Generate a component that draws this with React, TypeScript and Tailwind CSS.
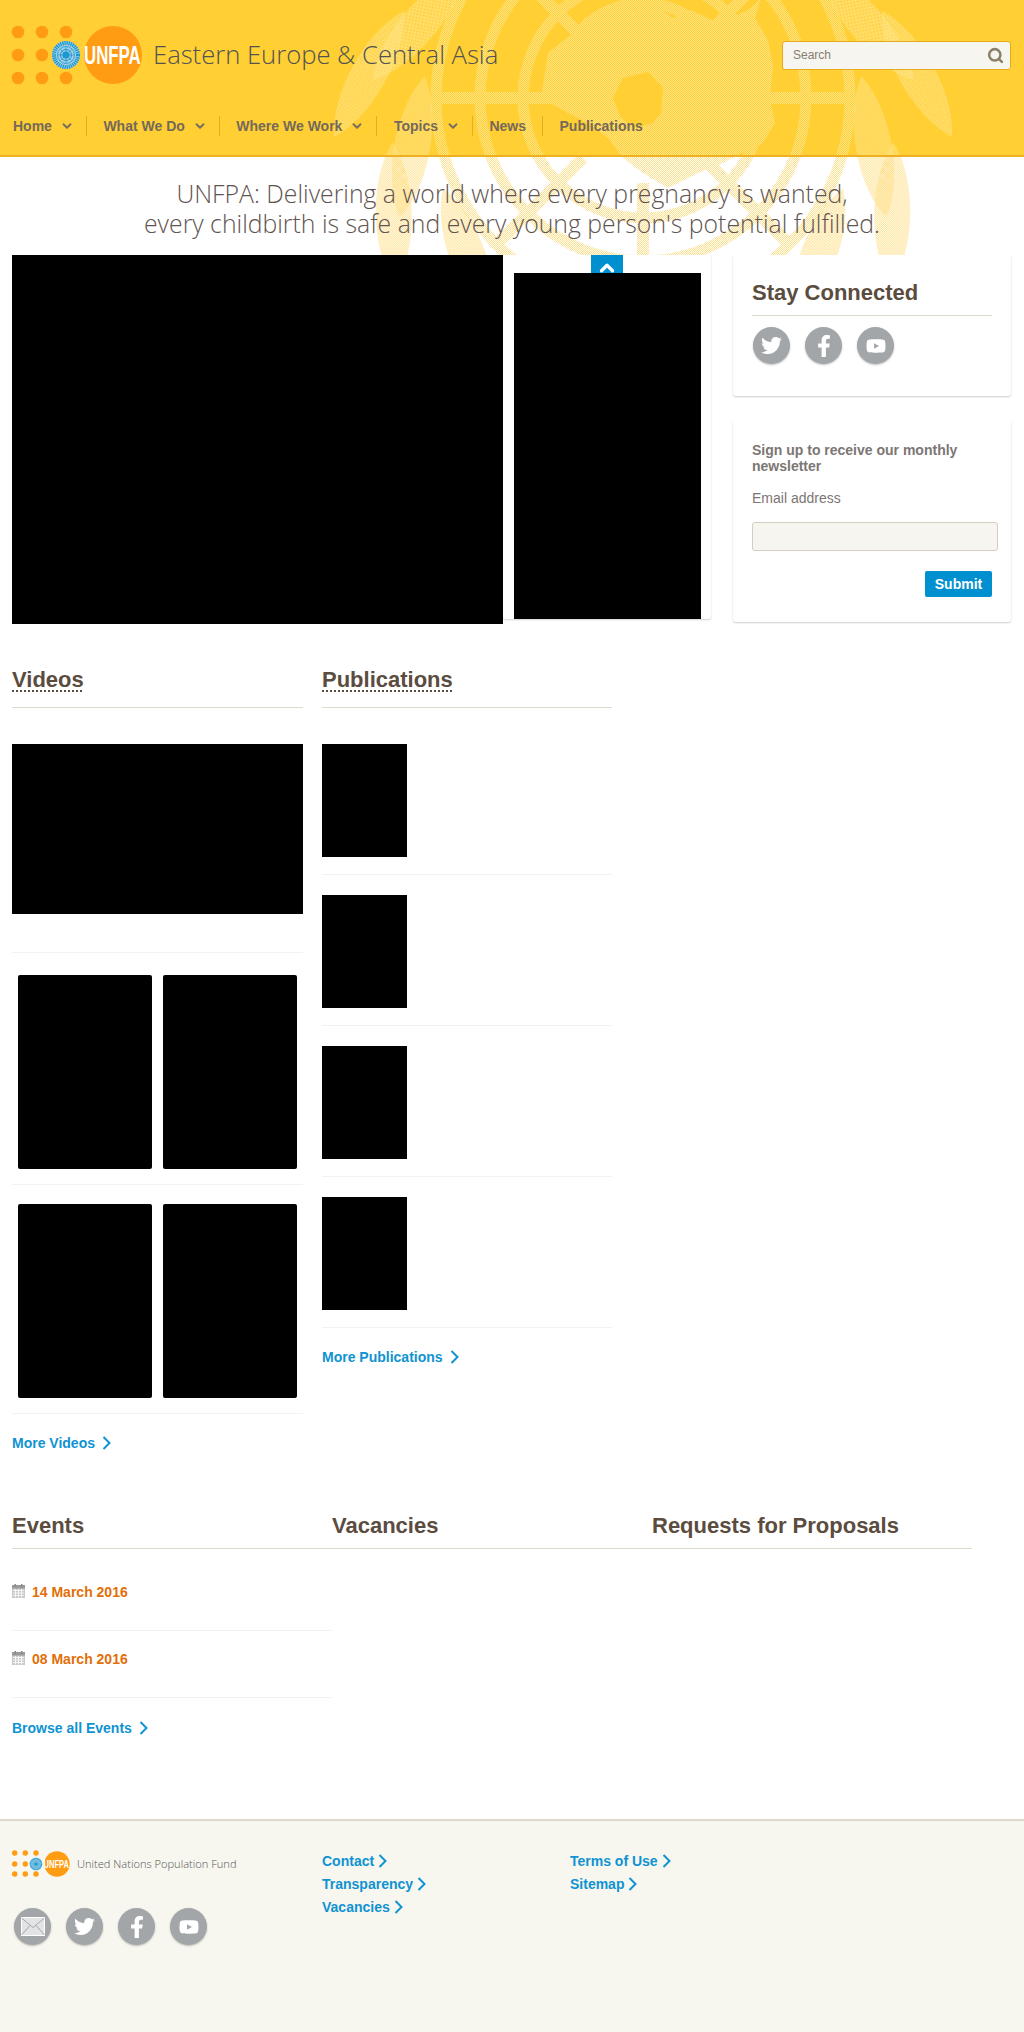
import React from "react";
import { ChevronDown, ChevronUp, Search } from "lucide-react";
import { FaTwitter, FaFacebookF, FaYoutube } from "react-icons/fa";

const SANS = "font-['Liberation_Sans',Arial,sans-serif]";

function UNEmblem({ cx, cy, r, color }: { cx: number; cy: number; r: number; color: string }) {
  const k = r / 14;
  return (
    <g transform={`translate(${cx} ${cy}) scale(${k})`} fill="none" stroke={color}>
      <circle r="14" fill="#9fd0e6" stroke="none" />
      <circle r="5.5" strokeWidth="1" />
      <circle r="8.5" strokeWidth="0.8" />
      <path d="M-8 0H8M0-8V8M-5.6-5.6L5.6 5.6M-5.6 5.6L5.6-5.6" strokeWidth="0.7" />
      <circle r="3.6" fill={color} stroke="none" />
      <circle r="12" strokeWidth="4" strokeDasharray="1.3 0.8" />
    </g>
  );
}

function Logo() {
  const dots = [18, 42, 66].flatMap((x) => [32, 55, 78].map((y) => [x, y]));
  return (
    <svg width="145" height="90" viewBox="0 0 145 90" className="shrink-0">
      {dots.map(([x, y]) => (
        <circle key={`${x}-${y}`} cx={x} cy={y} r="6.3" fill="#ff9c12" />
      ))}
      <circle cx="113" cy="55" r="29" fill="#ff9c12" />
      <circle cx="66" cy="55" r="15" fill="#ffcf33" />
      <UNEmblem cx={66} cy={55} r={14} color="#1c97d0" />
      <text transform="translate(84 64) scale(0.674 1)" fill="#fff" fontFamily="'Liberation Sans',Arial,sans-serif" fontWeight="700" fontSize="25">
        UNFPA
      </text>
    </svg>
  );
}

function FooterLogo() {
  const dots = [2.7, 13.3, 24].flatMap((x) => [4, 15, 25].map((y) => [x, y]));
  return (
    <svg width="60" height="30" viewBox="0 0 60 30" className="shrink-0">
      {dots.map(([x, y]) => (
        <circle key={`${x}-${y}`} cx={x} cy={y} r="2.7" fill="#ff9c12" />
      ))}
      <circle cx="45" cy="15" r="12.7" fill="#ff9c12" />
      <UNEmblem cx={24} cy={15} r={6.3} color="#1c97d0" />
      <text transform="translate(31.5 19) scale(0.686 1)" fill="#fff" fontFamily="'Liberation Sans',Arial,sans-serif" fontWeight="700" fontSize="11">
        UNFPA
      </text>
    </svg>
  );
}

const LEAF = "M-72 0C-35 -24 35 -24 72 0C35 24 -35 24 -72 0Z";
const rows: [number, number, number][] = [
  [18, 236, 22], [48, 236, 22], [78, 236, 22], [108, 236, 22], [138, 236, 22],
  [5, 275, 24], [35, 275, 24], [65, 275, 24], [95, 275, 24], [125, 275, 24], [152, 270, 30],
];

function Emblem({ id, fg, top }: { id: string; fg: string; top: number }) {
  const cx = 320;
  const cy = 320;
  const url = `url(#${id})`;
  return (
    <svg width="640" height="640" viewBox="0 0 640 640" className="absolute left-[323px]" style={{ top }} aria-hidden="true">
      <defs>
        <pattern id={id} width="2" height="2" patternUnits="userSpaceOnUse">
          <rect width="1" height="1" fill={fg} />
          <rect x="1" y="1" width="1" height="1" fill={fg} />
        </pattern>
        <clipPath id={`${id}-c`}>
          <circle cx={cx} cy={cy} r="212" />
        </clipPath>
      </defs>
      <g fill="none" stroke={url}>
        {[120, 163, 207].map((r) => (
          <circle key={r} cx={cx} cy={cy} r={r} strokeWidth="11" />
        ))}
        <path d="M260 250A85 85 0 0 1 380 250" strokeWidth="11" />
        <g clipPath={`url(#${id}-c)`} strokeWidth="12">
          <path d="M320 100V235M320 405V540M100 320H235M405 320H540M165 165L260 260M475 475L380 380M475 165L380 260M165 475L260 380" />
        </g>
      </g>
      <path
        fill={url}
        fillRule="evenodd"
        d="M218 320L225 275L250 255L262 240L285 235L295 222L312 232L330 226L350 240L368 232L395 245L425 232L438 220L432 240L445 262L450 290L447 320L452 345L440 365L425 372L400 385L375 395L345 410L320 395L300 380L285 360L265 345L245 335ZM290 320L300 300L325 294L340 310L338 335L330 345L312 350L298 340Z"
      />
      <g fill={url}>
        {rows.map(([a, r, t]) => (
          <g key={`${a}-${r}`}>
            <path transform={`rotate(${a} ${cx} ${cy}) translate(${cx} ${cy + r}) rotate(${t})`} d={LEAF} />
            <path transform={`rotate(${-a} ${cx} ${cy}) translate(${cx} ${cy + r}) rotate(${-t})`} d={LEAF} />
          </g>
        ))}
      </g>
    </svg>
  );
}

function NavItem({ label, chev, last, first }: { label: string; chev?: boolean; last?: boolean; first?: boolean }) {
  return (
    <li className={`flex h-[20px] items-center ${first ? "" : "pl-[16.5px]"} ${chev ? "pr-[12px]" : "pr-[16px]"} ${last ? "" : "border-r border-[#e8ad1f]"}`}>
      <span>{label}</span>
      {chev && <ChevronDown size={14} strokeWidth={3.4} className="ml-[8px] text-[#7a6f5c]" />}
    </li>
  );
}

function Circle({ children }: { children: React.ReactNode }) {
  return (
    <span className="flex h-[37px] w-[37px] shrink-0 items-center justify-center rounded-full bg-[#a3a6a8] text-white shadow-[0_1px_2px_rgba(0,0,0,0.25)]">
      {children}
    </span>
  );
}

function Chev({ small }: { small?: boolean }) {
  return (
    <svg width="9" height="14" viewBox="0 0 9 14" className={small ? "ml-[4px]" : "ml-[7px]"} fill="none" stroke="currentColor" strokeWidth="2">
      <path d="M1.5 1L7.5 7L1.5 13" />
    </svg>
  );
}

function More({ children, className = "", small }: { children: React.ReactNode; className?: string; small?: boolean }) {
  return (
    <a className={`flex h-[18px] items-center text-[14px] font-bold leading-[16px] text-[#0f93d2] ${className}`}>
      {children}
      <Chev small={small} />
    </a>
  );
}

function SecHead({ label }: { label: string }) {
  return (
    <div className="h-[46px] border-b border-[#e0dcc4] pt-[1px]">
      <h2 className="text-[22px] font-bold leading-[34px] text-[#5a4c3e] underline decoration-[#5a4c3e] decoration-dotted decoration-2 underline-offset-[3px]">
        {label}
      </h2>
    </div>
  );
}

function Calendar() {
  return (
    <svg width="13" height="14" viewBox="0 0 13 14" className="shrink-0">
      <rect x="0" y="1" width="13" height="13" fill="#c9c9c9" />
      <rect x="0" y="1" width="13" height="3.5" fill="#9a9a9a" />
      <rect x="2.5" y="0" width="1.5" height="3" fill="#8a8a8a" />
      <rect x="9" y="0" width="1.5" height="3" fill="#8a8a8a" />
      <path d="M1 6.5H12M1 9H12M1 11.5H12M3.5 5V13.5M6.5 5V13.5M9.5 5V13.5" stroke="#fff" strokeWidth="0.8" />
    </svg>
  );
}

function Envelope() {
  return (
    <svg width="24" height="19" viewBox="0 0 24 19">
      <rect x="0.5" y="0.5" width="23" height="18" fill="#e3e4e5" stroke="#fff" />
      <path d="M0.5 1L12 10.5L23.5 1M0.5 18L9 8.5M23.5 18L15 8.5" fill="none" stroke="#a3a6a8" strokeWidth="1" />
    </svg>
  );
}

function Divider({ className = "" }: { className?: string }) {
  return <div className={`h-px bg-[#f3f2ec] ${className}`} />;
}

function Pub({ top }: { top: string }) {
  return (
    <div className={top}>
      <div className="h-[113px] w-[85px] bg-black" />
      <Divider className="mt-[17px]" />
    </div>
  );
}

function VideoPair({ className = "" }: { className?: string }) {
  return (
    <div className={className}>
      <div className="flex gap-[11px] pl-[6px]">
        <div className="h-[194px] w-[134px] rounded-[2px] bg-black" />
        <div className="h-[194px] w-[134px] rounded-[2px] bg-black" />
      </div>
      <Divider className="mt-[15px]" />
    </div>
  );
}

function EventRow({ date }: { date: string }) {
  return (
    <div>
      <div className="flex h-[20px] items-start gap-[7px] pt-[2px]">
        <Calendar />
        <span className="text-[14px] font-bold leading-[16px] text-[#e26f08]">{date}</span>
      </div>
      <Divider className="mt-[28px]" />
    </div>
  );
}

export default function App() {
  return (
    <div className={`${SANS} relative h-[2032px] w-[1024px] overflow-hidden bg-white`}>
      <header className="relative h-[157px] overflow-hidden border-b-2 border-[#eeb021] bg-[#ffcf33]">
        <Emblem id="emb-a" fg="#ffe488" top={-222} />
        <div className="relative flex h-[90px] items-start">
          <Logo />
          <span className="mt-[38px] ml-[8px] font-['Open_Sans',sans-serif] text-[25.6px] font-light leading-[34px] text-[#515254]">
            Eastern Europe &amp; Central Asia
          </span>
          <div className="absolute top-[41px] left-[782px] flex h-[29px] w-[229px] items-center justify-between rounded-[3px] border border-[#e5ab1c] bg-[#f6f5ef] pr-[6px] pb-[2px] pl-[10px]">
            <span className="text-[12px] text-[#857d70]">Search</span>
            <Search size={17} strokeWidth={3.6} className="mt-[2px] text-[#8a8168]" />
          </div>
        </div>
        <ul className="relative mt-[26px] flex pl-[13px] text-[14px] font-bold text-[#75695a]">
          <NavItem first chev label="Home" />
          <NavItem chev label="What We Do" />
          <NavItem chev label="Where We Work" />
          <NavItem chev label="Topics" />
          <NavItem label="News" />
          <NavItem last label="Publications" />
        </ul>
      </header>

      <div className="relative h-[98px] overflow-hidden">
        <Emblem id="emb-b" fg="#ffdf88" top={-379} />
        <p className="relative pt-[21px] text-center font-['Open_Sans',sans-serif] text-[24.8px] font-light leading-[30px] text-[#5f5450]">
          UNFPA: Delivering a world where every pregnancy is wanted,
          <br />
          every childbirth is safe and every young person's potential fulfilled.
        </p>
      </div>

      <section className="flex items-start pl-[12px]">
        <div className="h-[369px] w-[491px] bg-black" />
        <div className="relative h-[364px] w-[208px] rounded-b-[3px] shadow-[0_1px_2px_rgba(0,0,0,0.18)]">
          <div className="absolute top-0 left-[88px] flex h-[18px] w-[32px] items-start justify-center overflow-hidden bg-[#0090d0]">
            <ChevronUp size={22} strokeWidth={3.5} className="mt-[2px] text-white" />
          </div>
          <div className="absolute top-[18px] left-[11px] h-[346px] w-[187px] bg-black" />
        </div>
        <div className="ml-[22px] w-[278px]">
          <div className="h-[141px] rounded-b-[3px] px-[19px] pt-[24px] shadow-[0_1px_2px_rgba(0,0,0,0.2)]">
            <h3 className="h-[37px] border-b border-[#e0dcc4] text-[22px] font-bold leading-[28px] text-[#5a4c3e]">Stay Connected</h3>
            <div className="mt-[11px] flex gap-[15px] pl-[1px]">
              <Circle><FaTwitter size={21} /></Circle>
              <Circle><FaFacebookF size={22} /></Circle>
              <Circle><FaYoutube size={20} /></Circle>
            </div>
          </div>
          <div className="mt-[24px] h-[202px] rounded-b-[3px] pt-[22px] pr-[13px] pl-[19px] shadow-[0_1px_2px_rgba(0,0,0,0.2)]">
            <p className="pr-[10px] text-[14px] font-bold leading-[16px] text-[#7c7674]">Sign up to receive our monthly newsletter</p>
            <p className="mt-[16px] text-[14px] leading-[16px] text-[#7c7674]">Email address</p>
            <div className="mt-[16px] h-[29px] rounded-[3px] border border-[#d6cdc0] bg-[#f7f5ef]" />
            <div className="mt-[20px] flex justify-end pr-[6px]">
              <span className="flex h-[26px] w-[67px] items-center justify-center rounded-[2px] bg-[#0090d0] text-[14px] font-bold text-white">Submit</span>
            </div>
          </div>
        </div>
      </section>

      <section className="mt-[38px] flex items-start gap-[19px] pl-[12px]">
        <div className="w-[291px]">
          <SecHead label="Videos" />
          <div className="mt-[36px] h-[170px] w-[291px] bg-black" />
          <Divider className="mt-[38px]" />
          <VideoPair className="pt-[22px]" />
          <VideoPair className="pt-[19px]" />
          <More className="mt-[20px]">More Videos</More>
        </div>
        <div className="w-[290px]">
          <SecHead label="Publications" />
          <Pub top="mt-[36px]" />
          <Pub top="mt-[20px]" />
          <Pub top="mt-[20px]" />
          <Pub top="mt-[20px]" />
          <More className="mt-[20px]">More Publications</More>
        </div>
      </section>

      <section className="mt-[56px] pl-[12px]">
        <div className="grid h-[41px] w-[960px] grid-cols-3 border-b border-[#e0dcc4] pt-[3px] text-[22px] font-bold leading-[30px] text-[#5a4c3e]">
          <h2>Events</h2>
          <h2>Vacancies</h2>
          <h2>Requests for Proposals</h2>
        </div>
        <div className="w-[320px]">
          <div className="pt-[33px]"><EventRow date="14 March 2016" /></div>
          <div className="pt-[18px]"><EventRow date="08 March 2016" /></div>
          <More className="mt-[21px]">Browse all Events</More>
        </div>
      </section>

      <footer className="absolute top-[1819px] left-0 h-[213px] w-full border-t-2 border-[#ddd9cb] bg-[#f7f6ef]">
        <div className="flex pt-[28px] pl-[12px]">
          <div className="w-[310px]">
            <div className="flex h-[30px] items-center gap-[5px]">
              <FooterLogo />
              <span className="font-['Open_Sans',sans-serif] text-[11.1px] font-light text-[#555]">United Nations Population Fund</span>
            </div>
            <div className="mt-[29px] flex gap-[15px] pl-[2px]">
              <Circle><Envelope /></Circle>
              <Circle><FaTwitter size={21} /></Circle>
              <Circle><FaFacebookF size={22} /></Circle>
              <Circle><FaYoutube size={20} /></Circle>
            </div>
          </div>
          <div className="flex w-[248px] flex-col gap-[5px] pt-[3px]">
            <More small>Contact</More>
            <More small>Transparency</More>
            <More small>Vacancies</More>
          </div>
          <div className="flex flex-col gap-[5px] pt-[3px]">
            <More small>Terms of Use</More>
            <More small>Sitemap</More>
          </div>
        </div>
      </footer>
    </div>
  );
}
